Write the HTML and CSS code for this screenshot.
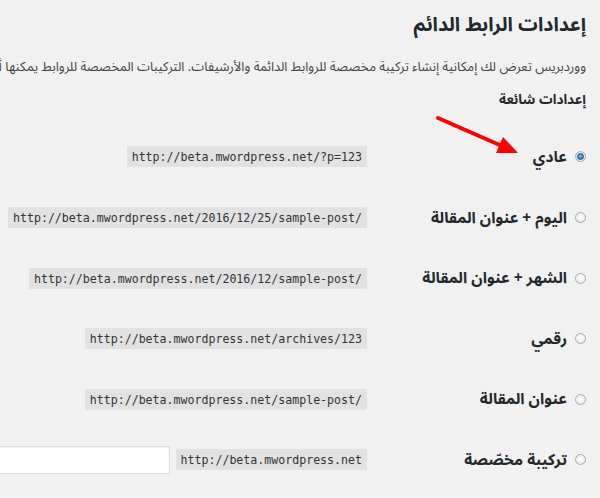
FILE: index.html
```html
<!DOCTYPE html>
<html dir="rtl" lang="ar">

<head>
    <meta charset="utf-8">
    <title>إعدادات الرابط الدائم</title>
    <link rel="stylesheet" href="styles.css">
</head>

<body>
    <div class="wrap">
        <h1>إعدادات الرابط الدائم</h1>
        <p class="desc">ووردبريس تعرض لك إمكانية إنشاء تركيبة مخصصة للروابط الدائمة والأرشيفات. التركيبات المخصصة للروابط يمكنها أن تحسّن شكل الروابط وسهولة استخدامها.</p>
        <h2>إعدادات شائعة</h2>

        <div class="options">
            <div class="row">
                <label class="opt"><input type="radio" name="selection" checked> عادي</label>
                <div class="val"><code dir="ltr">http://beta.mwordpress.net/?p=123</code></div>
            </div>
            <div class="row">
                <label class="opt"><input type="radio" name="selection"> اليوم + عنوان المقالة</label>
                <div class="val"><code dir="ltr">http://beta.mwordpress.net/2016/12/25/sample-post/</code></div>
            </div>
            <div class="row">
                <label class="opt"><input type="radio" name="selection"> الشهر + عنوان المقالة</label>
                <div class="val"><code dir="ltr">http://beta.mwordpress.net/2016/12/sample-post/</code></div>
            </div>
            <div class="row">
                <label class="opt"><input type="radio" name="selection"> رقمي</label>
                <div class="val"><code dir="ltr">http://beta.mwordpress.net/archives/123</code></div>
            </div>
            <div class="row">
                <label class="opt"><input type="radio" name="selection"> عنوان المقالة</label>
                <div class="val"><code dir="ltr">http://beta.mwordpress.net/sample-post/</code></div>
            </div>
            <div class="row">
                <label class="opt"><input type="radio" name="selection"> تركيبة مخصّصة</label>
                <div class="val">
                    <code dir="ltr">http://beta.mwordpress.net</code>
                    <input type="text" class="regular-text" value="">
                </div>
            </div>
        </div>

        <!-- red pointer arrow drawn over the page -->
        <svg class="pointer" width="600" height="200" viewBox="0 0 600 200">
            <line x1="438" y1="118" x2="502" y2="146" stroke="#f00" stroke-width="4" stroke-linecap="round" />
            <polygon points="518,153 496,153 503,137" fill="#f00" />
        </svg>
    </div>
</body>

</html>
```

FILE: styles.css
```css
/* Page */
html,
body {
    margin: 0;
    padding: 0;
    overflow: hidden;
}

body {
    background: #f1f1f1;
    color: #23282d;
    font-family: "Noto Sans Arabic", "Noto Sans", "DejaVu Sans", Tahoma, sans-serif;
}

.wrap {
    position: relative;
    padding: 10px 14px 0 0;
}

/* Headings */
h1 {
    margin: 0;
    font-size: 19.5px;
    font-weight: bold;
    line-height: 29px;
}

.desc {
    margin: 18px 0 0;
    font-size: 13px;
    line-height: 20px;
    color: #444;
    white-space: nowrap;
}

h2 {
    margin: 13px 0 0;
    font-size: 13.5px;
    font-weight: bold;
    line-height: 20px;
}

/* Option rows */
.options {
    margin-top: 16.7px;
}

.row {
    display: flex;
    align-items: center;
    height: 60.6px;
}

.opt {
    flex: none;
    width: 210px;
    display: flex;
    align-items: center;
    gap: 8px;
    font-size: 15.5px;
    font-weight: bold;
}

.val {
    flex: none;
    display: flex;
    align-items: center;
    gap: 6px;
    padding-right: 9px;
}

code {
    font-family: "DejaVu Sans Mono", monospace;
    font-size: 11.6px;
    line-height: 16px;
    padding: 3px 5px 2px;
    background: #e2e2e2;
    color: #333;
    white-space: nowrap;
    unicode-bidi: isolate;
}

/* Radio buttons */
input[type="radio"] {
    appearance: none;
    -webkit-appearance: none;
    margin: 0;
    width: 11px;
    height: 11px;
    border: 1px solid #a7aaad;
    border-radius: 50%;
    background: radial-gradient(circle at 50% 40%, #fff, #e4e4e4);
    box-sizing: border-box;
    display: flex;
    align-items: center;
    justify-content: center;
}

input[type="radio"]:checked::before {
    content: "";
    width: 5px;
    height: 5px;
    border-radius: 50%;
    background: radial-gradient(circle at 45% 40%, #7fc3ee, #1d5d92);
    border: 1px solid #174c7a;
}

/* Custom structure field */
.regular-text {
    flex: none;
    width: 320px;
    height: 28px;
    box-sizing: border-box;
    border: 1px solid #ddd;
    background: #fff;
    box-shadow: inset 0 1px 2px rgba(0, 0, 0, .07);
    margin: 0;
}

/* Pointer arrow */
.pointer {
    position: absolute;
    left: 0;
    top: 0;
    pointer-events: none;
}
```
